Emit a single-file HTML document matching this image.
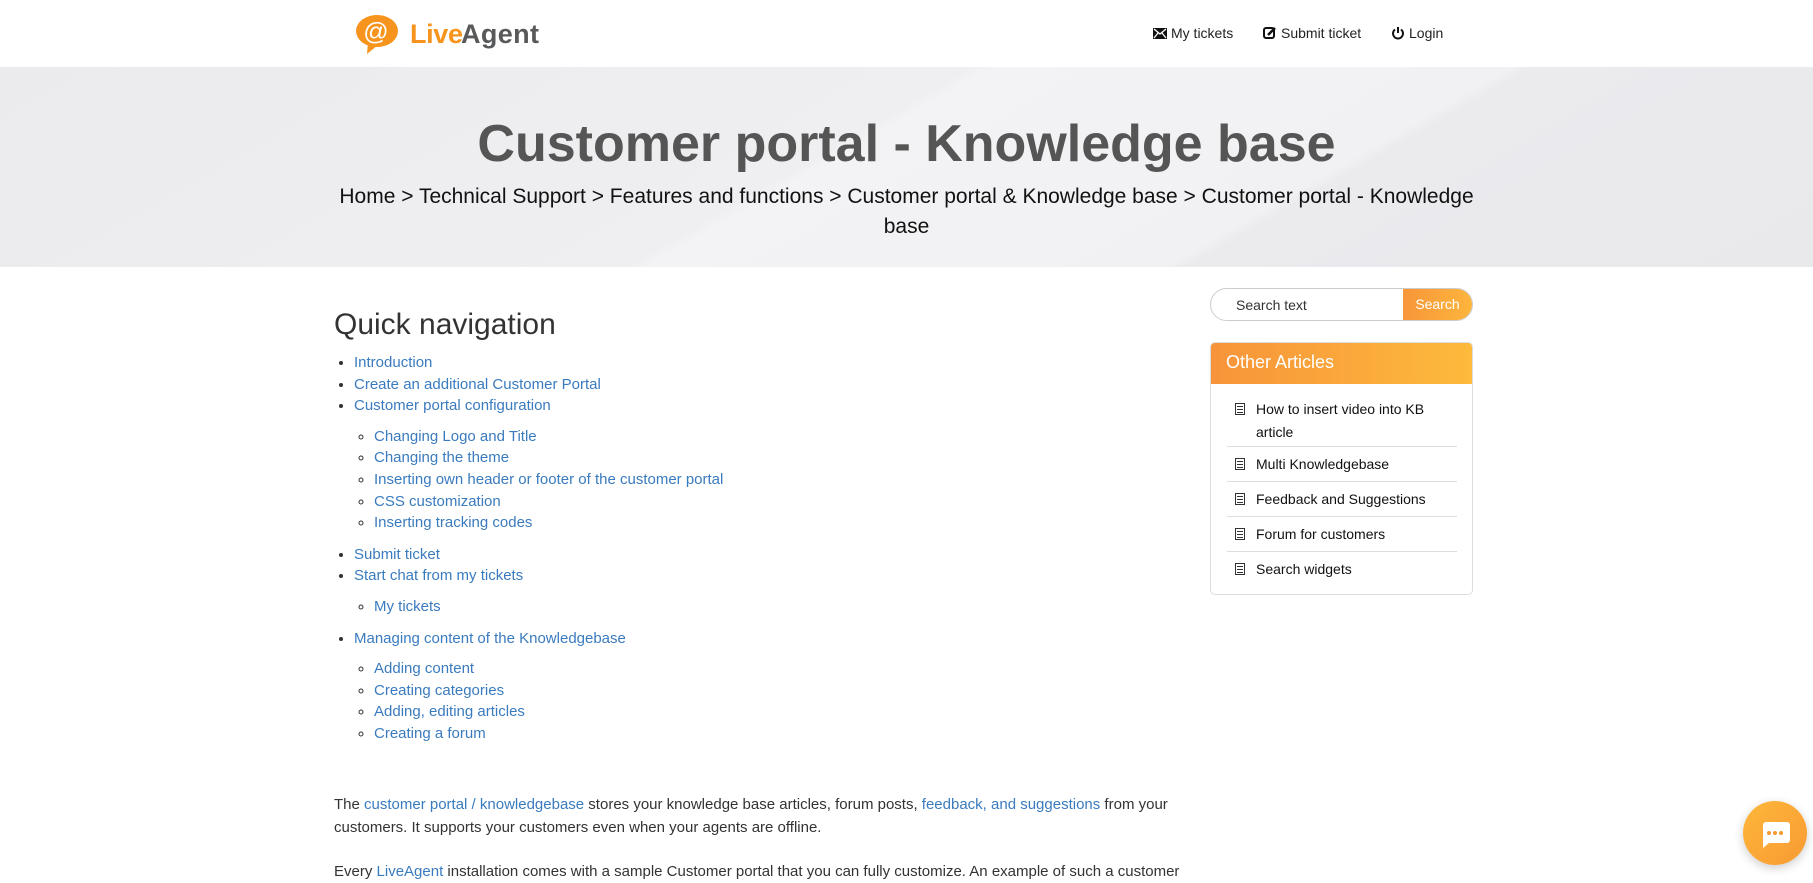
<!DOCTYPE html>
<html><head><meta charset="utf-8"><style>
*{box-sizing:border-box;margin:0;padding:0}
body{width:1813px;height:882px;overflow:hidden;background:#fff;font-family:"Liberation Sans",Arial,sans-serif;color:#333;position:relative}
a{color:#3a7bbf;text-decoration:none}
.hdr{position:absolute;top:0;left:0;width:1813px;height:67px;background:#fff}
.logo{position:absolute;left:353px;top:12px;height:44px}
.nav{position:absolute;top:25px;font-size:14px;color:#222;display:flex;align-items:center;gap:4px}
.banner{position:absolute;top:67px;left:0;width:1813px;height:200px;background:linear-gradient(150deg,#ebebee 0%,#efeff1 45%,#f3f3f5 46%,#f1f1f3 70%,#ebebee 71%,#e9e9ec 100%)}
.banner h1{position:absolute;top:47px;left:0;width:1813px;text-align:center;font-size:52px;font-weight:bold;color:#555;line-height:60px}
.bc{position:absolute;top:115px;left:0;width:1813px;text-align:center;font-size:21px;line-height:30px;color:#111}
.main{position:absolute;left:334px;top:300px;width:860px;font-size:15px}
.main h2{font-size:30px;font-weight:normal;line-height:50px;color:#333;margin:0 0 2px}
ul{list-style:disc;padding-left:20px;line-height:21.6px}
ul ul{list-style:circle;margin:9px 0 10px;padding-left:20px}
.p{position:absolute;left:334px;width:860px;font-size:15px;line-height:23px;color:#333}
.search{position:absolute;left:1210px;top:288px;width:263px;height:33px;border:1px solid #ccc;border-radius:17px;overflow:hidden;font-size:14px}
.search span{position:absolute;left:25px;top:8px;color:#333}
.search b{position:absolute;right:0;top:0;width:69px;height:33px;background:linear-gradient(90deg,#f7963a,#fdb53c);color:#fff;font-weight:normal;text-align:center;line-height:31px}
.box{position:absolute;left:1210px;top:342px;width:263px;height:253px;border:1px solid #ddd;border-radius:5px;overflow:hidden}
.box .h{height:41px;background:linear-gradient(90deg,#f7943a,#fdba3c);color:#fff;font-size:18px;line-height:38px;padding-left:15px}
.it{position:absolute;left:16px;width:230px;font-size:14px;line-height:23px;color:#111;padding-left:29px}
.it.sep{border-top:1px solid #ddd}
.ic{position:absolute;left:8px;top:5px;width:10px;height:12px;border:1px solid #333;background:repeating-linear-gradient(#fff 0 2px,#333 2px 3px);background-clip:content-box;padding:1px}
.chat{position:absolute;left:1743px;top:801px;width:64px;height:64px;border-radius:50%;background:linear-gradient(135deg,#fdb73a,#f89a34);box-shadow:0 3px 10px rgba(0,0,0,.2)}
</style></head><body>
<div class="hdr">
 <svg class="logo" width="190" height="44" viewBox="0 0 190 44">
  <ellipse cx="24" cy="19" rx="21" ry="16" fill="#f7941d"/>
  <path d="M15 30 L14 42 L25 33 Z" fill="#f7941d"/>
  <text x="23" y="28" text-anchor="middle" font-family="Liberation Sans" font-size="25" fill="#fff">@</text>
  <text x="57" y="31" font-family="Liberation Sans" font-weight="bold" font-size="27" fill="#f7941d" letter-spacing="-1" textLength="52">Live</text>
  <text x="108" y="31" font-family="Liberation Sans" font-weight="bold" font-size="27" fill="#58595b" letter-spacing="-1" textLength="77">Agent</text>
 </svg>
 <div class="nav" style="left:1153px"><svg width="14" height="11" viewBox="0 0 14 11"><rect width="14" height="11" fill="#111"/><path d="M1 1L7 6L13 1M1 10L5 5M13 10L9 5" stroke="#fff" stroke-width="1.3" fill="none"/></svg>My tickets</div>
 <div class="nav" style="left:1263px"><svg width="14" height="14" viewBox="0 0 14 14"><rect x="1" y="2" width="10" height="10" rx="2" fill="none" stroke="#111" stroke-width="2"/><path d="M5 9L12 2" stroke="#111" stroke-width="2.5"/></svg>Submit ticket</div>
 <div class="nav" style="left:1391px"><svg width="14" height="14" viewBox="0 0 14 14"><path d="M4 3.5A5 5 0 1 0 10 3.5" fill="none" stroke="#111" stroke-width="2"/><path d="M7 1V7" stroke="#111" stroke-width="2"/></svg>Login</div>
</div>
<div class="banner">
 <h1>Customer portal - Knowledge base</h1>
 <div class="bc">Home &gt; Technical Support &gt; Features and functions &gt; Customer portal &amp; Knowledge base &gt; Customer portal - Knowledge<br>base</div>
</div>
<div class="main">
 <h2>Quick navigation</h2>
 <ul>
  <li><a>Introduction</a></li>
  <li><a>Create an additional Customer Portal</a></li>
  <li><a>Customer portal configuration</a>
   <ul><li><a>Changing Logo and Title</a></li><li><a>Changing the theme</a></li><li><a>Inserting own header or footer of the customer portal</a></li><li><a>CSS customization</a></li><li><a>Inserting tracking codes</a></li></ul></li>
  <li><a>Submit ticket</a></li>
  <li><a>Start chat from my tickets</a>
   <ul><li><a>My tickets</a></li></ul></li>
  <li><a>Managing content of the Knowledgebase</a>
   <ul><li><a>Adding content</a></li><li><a>Creating categories</a></li><li><a>Adding, editing articles</a></li><li><a>Creating a forum</a></li></ul></li>
 </ul>
</div>
<div class="p" style="top:793px">The <a>customer portal / knowledgebase</a> stores your knowledge base articles, forum posts, <a>feedback, and suggestions</a> from your customers. It supports your customers even when your agents are offline.</div>
<div class="p" style="top:860px">Every <a>LiveAgent</a> installation comes with a sample Customer portal that you can fully customize. An example of such a customer</div>
<div class="search"><span>Search text</span><b>Search</b></div>
<div class="box">
 <div class="h">Other Articles</div>
 <div class="it" style="top:55px"><i class="ic"></i>How to insert video into KB article</div>
 <div class="it sep" style="top:103px;padding-top:6px"><i class="ic" style="top:11px"></i>Multi Knowledgebase</div>
 <div class="it sep" style="top:138px;padding-top:6px"><i class="ic" style="top:11px"></i>Feedback and Suggestions</div>
 <div class="it sep" style="top:173px;padding-top:6px"><i class="ic" style="top:11px"></i>Forum for customers</div>
 <div class="it sep" style="top:208px;padding-top:6px"><i class="ic" style="top:11px"></i>Search widgets</div>
</div>
<div class="chat"><svg width="64" height="64" viewBox="0 0 64 64"><path d="M20 21h24a3 3 0 0 1 3 3v15a3 3 0 0 1-3 3H26l-6 5V24a3 3 0 0 1 3-3z" fill="#fff"/><circle cx="26" cy="32" r="2" fill="#f89a34"/><circle cx="32" cy="32" r="2" fill="#f89a34"/><circle cx="38" cy="32" r="2" fill="#f89a34"/></svg></div>
</body></html>
